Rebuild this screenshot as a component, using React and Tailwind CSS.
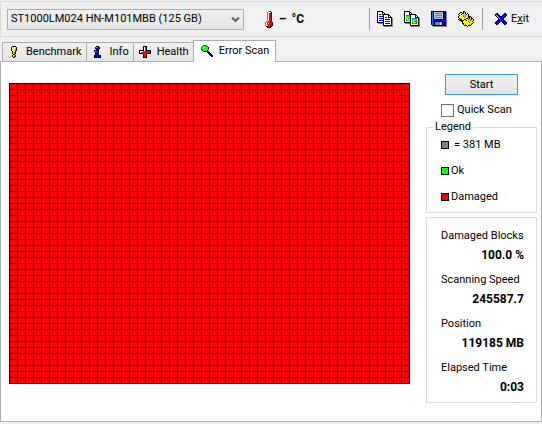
import React from "react";

const COLORS = {
  k: "#000000", w: "#ffffff", b: "#000080", B: "#0000ff", g: "#808080", s: "#c0c0c0",
  y: "#ffff00", o: "#808000", r: "#ff0000", d: "#a00000", G: "#00ff00", D: "#008000", c: "#00ffff", t: "#0080ff",
};

const COPY = [
  "kkkkkk..........",
  "kwwwwkk.........",
  "kwwwwkwk........",
  "kwBBwkkkkkkk....",
  "kwwwwwkwwwwkk...",
  "kwBBBBkwwwwkwk..",
  "kwwwwwkwBBwkkkk.",
  "kwBBBBkwwwwwwwkg",
  "kwwwwwkwBBBBBwkg",
  "kwBBBBkwwwwwwwkg",
  "kwwwwwkwBBBBBwkg",
  "kkkkkkkwwwwwwwkg",
  ".gggggkwBBBBBwkg",
  "......kwwwwwwwkg",
  "......kkkkkkkkkg",
  ".......ggggggggg",
];
const COPY_IMAGE = [
  "kkkkkk..........",
  "kwwwwkk.........",
  "kwwwwkwk........",
  "kwwwwkkkkkkk....",
  "kwttttkwwwwkk...",
  "kwGGGGkwwwwkwk..",
  "kwGyyGkwwwwkkkk.",
  "kwGyrGkwtttttwkg",
  "kwGyyGkwGGGGGwkg",
  "kwDGGGkwGyyGGwkg",
  "kwwwwwkwGyrGDwkg",
  "kkkkkkkwGyyGDwkg",
  ".gggggkwDGGDDwkg",
  "......kwwwwwwwkg",
  "......kkkkkkkkkg",
  ".......ggggggggg",
];
const SAVE = [
  "kkkkkkkkkkkkkkk.",
  "ktkssssssssskBkg",
  "ktksgggggggskkkg",
  "ktkssssssssskBkg",
  "ktksgggggggskBkg",
  "ktkssssssssskBkg",
  "ktksgggggggskBkg",
  "ktkssssssssskBkg",
  "ktBkkkkkkkkkBBkg",
  "ktBBBBBBBBBBBBkg",
  "ktBkkkkkkkkkBBkg",
  "ktBkgggggsskBBkg",
  "ktBkgggggsskBBkg",
  "ktBkgggggsskBBkg",
  ".kkkkkkkkkkkkkkg",
  "..gggggggggggggg",
];
const GEARS = [
  ".....kk.........",
  "..kk.ksk........",
  ".kyykksk.k......",
  "kyykyysykyk.....",
  ".kyyyosoyyk.....",
  "kyyyyosoyykkk...",
  "kyyyyyoyyykksk..",
  ".koyyyyykkykskk.",
  "kykkyykkyyksskyk",
  ".kkkkkyykyysoyyk",
  "...kkyyyyyosoyk.",
  "....kyyyyyyoyyyk",
  "....kkyyyyyyyok.",
  ".....kyoyyyoyk..",
  "......kkkykkk...",
  ".........k......",
];
const EXIT = [
  ".kk......kk.",
  "kBBk....kBBk",
  "kcBBk..kBBBk",
  ".kcBBkkBBBk.",
  "..kcBBBBBk..",
  "...kcBBBk...",
  "...kBBBBk...",
  "..kBBBBBBk..",
  ".kBBBkkBBBk.",
  "kBBBk..kBBBk",
  "kBBk....kBBk",
  ".kk......kk.",
];
const THERMOMETER = [
  "...ggk..",
  "..gwwsk.",
  "..gwrrk.",
  "..gwrrk.",
  "..gwrrk.",
  "..gwrrk.",
  "..gwrrk.",
  "..gwrrk.",
  "..gwrrk.",
  "..gwrrk.",
  ".gwrrrk.",
  "gwrrrrrk",
  "gwrwrrrk",
  "gwrrrrrk",
  "gswrrrkk",
  ".kkrrkk.",
  "..kkkk..",
];
const BENCHMARK = [
  ".kkkk.",
  "kywyyk",
  "kwyyyk",
  "kyyyok",
  "kyyyok",
  ".kyyk.",
  ".kyok.",
  ".kyok.",
  "..kk..",
  ".kyyk.",
  ".kyok.",
  "..kk..",
];
const INFO = [
  "..kkk..",
  ".kctBk.",
  ".kBBbk.",
  "..kkk..",
  "kkkkk..",
  "kctBk..",
  ".kBBk..",
  ".kBBk..",
  ".kBBk..",
  "kkBBkkk",
  "kBBBBbk",
  "kkkkkkk",
];
const HEALTH = [
  "....kkkk....",
  "....kwrk....",
  "....kwrk....",
  "....kwrk....",
  "kkkkkwrkkkkk",
  "kwwwrrrrrrrk",
  "kwrrrrrrrrdk",
  "kkkkrrrkkkkk",
  "....krrk....",
  "....krrk....",
  "....krdk....",
  "....kkkk....",
];
const SCAN = [
  "..DDDD......",
  ".DGGGGD.....",
  "DGwwGGGk....",
  "DGwGGGGk....",
  "DGGGGGGk....",
  ".kGGGGk.....",
  "..kkkkkk....",
  "......kbk...",
  ".......kbk..",
  "........kbk.",
  ".........kbk",
  "..........kk",
];

function PixelIcon({ rows }) {
  return (
    <svg className="shrink-0" width={rows[0].length} height={rows.length} shapeRendering="crispEdges" aria-hidden="true">
      {rows.flatMap((row, y) =>
        [...row].map((c, x) => (c === "." ? null : <rect key={`${x}-${y}`} x={x} y={y} width="1" height="1" fill={COLORS[c]} />))
      )}
    </svg>
  );
}

function Tab({ icon, label, active }) {
  return (
    <button
      type="button"
      role="tab"
      aria-selected={!!active}
      className={
        active
          ? "relative -mb-px -ml-px flex h-[22px] items-center gap-1 border border-b-0 border-[#acacac] bg-white pr-[6px] pb-[2px] pl-[5px]"
          : "-ml-px flex h-[19px] items-center gap-1 border border-b-0 border-[#acacac] bg-linear-to-b from-[#f0f0f0] to-[#e5e5e5] pr-1 pl-[3px] first:ml-0"
      }
    >
      <span className="flex w-4 justify-center">
        <PixelIcon rows={icon} />
      </span>
      {label}
    </button>
  );
}

function ToolButton({ icon, label }) {
  return (
    <button type="button" aria-label={label}>
      <PixelIcon rows={icon} />
    </button>
  );
}

function BlockMap() {
  return (
    <svg className="shrink-0" width="401" height="301" shapeRendering="crispEdges" role="img" aria-label="Scanned blocks">
      <defs>
        <pattern id="block" width="8" height="6" patternUnits="userSpaceOnUse">
          <rect width="8" height="6" fill="#000" />
          <rect x="1" y="1" width="7" height="5" fill="#f00" />
        </pattern>
      </defs>
      <rect width="401" height="301" fill="url(#block)" />
    </svg>
  );
}

function LegendRow({ swatch, children }) {
  return (
    <li className="flex h-4 items-center gap-[2px]">
      <span className={`size-2 border border-black ${swatch}`} />
      {children}
    </li>
  );
}

function Stat({ label, value }) {
  return (
    <div>
      <dt className="h-[19px] whitespace-nowrap">{label}</dt>
      <dd className="h-4 text-right text-[12px] font-bold">{value}</dd>
    </div>
  );
}

export default function App() {
  return (
    <div className="min-h-screen bg-[#f0f0f0] pt-px font-[Roboto,sans-serif] text-[11px] leading-4 text-black">
      <header className="flex h-9 items-center border-y border-l border-[#dcdcdc] pr-[13px] pl-[6px]">
        <div className="relative">
          <select aria-label="Drive" className="h-[21px] w-[237px] appearance-none border border-[#acacac] bg-linear-to-b from-[#f0f0f0] to-[#e5e5e5] px-[3px]">
            <option>ST1000LM024 HN-M101MBB (125 GB)</option>
          </select>
          <svg className="pointer-events-none absolute top-[7px] right-1" width="9" height="7" fill="none" stroke="#606060" strokeWidth="2" aria-hidden="true">
            <path d="M1 1.5 4.5 5 8 1.5" />
          </svg>
        </div>
        <div className="ml-[21px] flex items-center gap-[6px]">
          <PixelIcon rows={THERMOMETER} />
          <span className="flex gap-[5px] text-[12px] font-bold">
            <span>–</span>
            <span>°C</span>
          </span>
        </div>
        <div className="ml-auto flex items-center">
          <div className="mr-[7px] h-[22px] w-px bg-[#a0a0a0]" />
          <div className="flex items-center gap-[11px]">
            <ToolButton icon={COPY} label="Copy text" />
            <ToolButton icon={COPY_IMAGE} label="Copy screenshot" />
            <ToolButton icon={SAVE} label="Save" />
            <ToolButton icon={GEARS} label="Options" />
          </div>
          <div className="mr-3 ml-2 h-[22px] w-px bg-[#a0a0a0]" />
          <button type="button" className="flex items-center gap-1">
            <PixelIcon rows={EXIT} />
            <span>E<u>x</u>it</span>
          </button>
        </div>
      </header>

      <div role="tablist" className="flex h-6 items-end pl-[2px]">
        <Tab icon={BENCHMARK} label="Benchmark" />
        <Tab icon={INFO} label="Info" />
        <Tab icon={HEALTH} label="Health" />
        <Tab icon={SCAN} label="Error Scan" active />
      </div>

      <main role="tabpanel" className="flex justify-between border border-[#acacac] bg-white pt-3 pr-1 pb-[18px] pl-2">
        <div className="pt-[9px]">
          <BlockMap />
        </div>
        <aside className="w-[111px]">
          <button type="button" className="ml-[19px] block h-[21px] w-[73px] border border-[#3399ff] bg-linear-to-b from-[#f0f0f0] to-[#e5e5e5]">
            Start
          </button>
          <label className="mt-[7px] flex h-4 items-center gap-[3px] pl-[15px]">
            <input type="checkbox" className="size-[13px] appearance-none border border-[#707070] bg-white" />
            Quick Scan
          </label>
          <fieldset className="mt-[1px] h-[94px] border border-[#dcdcdc] pl-[14px]">
            <legend className="-ml-2 px-[2px]">Legend</legend>
            <ul className="space-y-[10px] pt-[2px]">
              <LegendRow swatch="bg-[#808080]"><span className="pl-[3px]">= 381 MB</span></LegendRow>
              <LegendRow swatch="bg-[#00ff00]">Ok</LegendRow>
              <LegendRow swatch="bg-[#ff0000]">Damaged</LegendRow>
            </ul>
          </fieldset>
          <dl className="mt-1 flex h-[186px] flex-col gap-[9px] border border-[#dcdcdc] pt-[10px] pr-3 pl-[14px]">
            <Stat label="Damaged Blocks" value="100.0 %" />
            <Stat label="Scanning Speed" value="245587.7" />
            <Stat label="Position" value="119185 MB" />
            <Stat label="Elapsed Time" value="0:03" />
          </dl>
        </aside>
      </main>
    </div>
  );
}
